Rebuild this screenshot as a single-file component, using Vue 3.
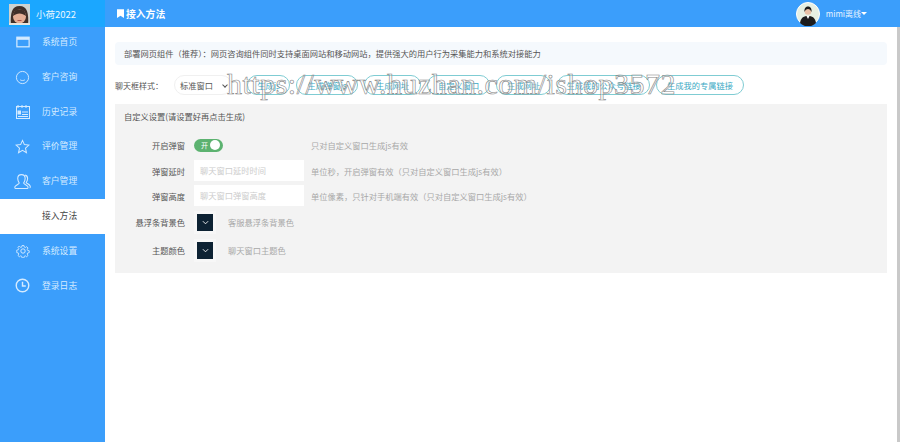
<script setup>
const menus = [
  { name: '系统首页', icon: 'home' },
  { name: '客户咨询', icon: 'smile' },
  { name: '历史记录', icon: 'history' },
  { name: '评价管理', icon: 'star' },
  { name: '客户管理', icon: 'user' },
  { name: '接入方法', icon: '', active: true },
  { name: '系统设置', icon: 'gear' },
  { name: '登录日志', icon: 'clock' }
]

const buttons = [
  { text: '生成js', width: 43 },
  { text: '生成弹窗js', width: 62 },
  { text: '生成网址', width: 57 },
  { text: '自定义窗口', width: 63 },
  { text: '生成网址', width: 55 },
  { text: '生成我的公众号链接', width: 93 },
  { text: '生成我的专属链接', width: 88 }
]

const inputs = [
  { label: '弹窗延时', placeholder: '聊天窗口延时时间', hint: '单位秒，开启弹窗有效（只对自定义窗口生成js有效）' },
  { label: '弹窗高度', placeholder: '聊天窗口弹窗高度', hint: '单位像素，只针对手机端有效（只对自定义窗口生成js有效）' }
]

const swatches = [
  { label: '悬浮条背景色', hint: '客服悬浮条背景色' },
  { label: '主题颜色', hint: '聊天窗口主题色' }
]
</script>

<template>
  <div class="page">
    <aside class="sidebar">
      <div class="brand">
        <svg class="brand-avatar" viewBox="0 0 21 21">
          <rect width="21" height="21" fill="#cfd3cf" />
          <path d="M2 21c-1-12 1-19 8.500-19S20 9 19 21z" fill="#3f2f28" />
          <ellipse cx="10.500" cy="12.500" rx="6.500" ry="7" fill="#e3ae95" />
          <path d="M4 12c.5-5 3-6.500 6.500-6.500S16.500 7 17 12c-4-3.500-9-3.500-13 0z" fill="#3f2f28" />
          <path d="M8.500 16.500h4" stroke="#b0524a" stroke-width="1" />
          <rect y="19" width="21" height="2" fill="#e8e4dc" />
        </svg>
        <span>小荷2022</span>
      </div>
      <nav>
        <a v-for="m in menus" :key="m.name" :class="['menu-item', { active: m.active }]">
          <span class="menu-icon">
            <svg v-if="m.icon === 'home'" viewBox="0 0 16 16" width="14" height="14">
              <rect x="1" y="2.500" width="14" height="11" fill="none" stroke="#d5ebff" stroke-width="1.400" />
              <rect x="1" y="2.500" width="14" height="3" fill="#d5ebff" />
            </svg>
            <svg v-if="m.icon === 'smile'" viewBox="0 0 16 16" width="15" height="15" fill="none" stroke="#d5ebff" stroke-width="1">
              <circle cx="8" cy="8" r="6.500" />
              <path d="M5.500 10.500c1.500 1 3.500 1 5 0" />
            </svg>
            <svg v-if="m.icon === 'history'" viewBox="0 0 16 16" width="16" height="16" fill="none" stroke="#d5ebff" stroke-width="1">
              <rect x="1.500" y="2.500" width="13" height="12" />
              <path d="M3 1v3M7 1v3M11 1v3M7 8h6M7 10.500h6M3 12.500h10" />
              <rect x="3" y="7" width="2.500" height="3" fill="#d5ebff" />
            </svg>
            <svg v-if="m.icon === 'star'" viewBox="0 0 16 16" width="15" height="15" fill="none" stroke="#d5ebff" stroke-width="1.100">
              <path d="M8 1.500l2 4.500 4.800.5-3.600 3.200 1 4.800L8 12l-4.200 2.500 1-4.800L1.200 6.500 6 6z" />
            </svg>
            <svg v-if="m.icon === 'user'" viewBox="0 0 16 16" width="17" height="17" fill="none" stroke="#d5ebff" stroke-width="1">
              <path d="M7 1.500c2.400 0 3.500 1.700 3.500 3.700S9.300 9 9 9.500c0 1 3 1.500 4 3.200.4.800.2 1.800-.5 1.800H1.500c-.7 0-.9-1-.5-1.800C2 11 5 10.500 5 9.500 4.700 9 3.500 7.200 3.500 5.200S4.600 1.500 7 1.500z" />
              <path d="M10.500 2c1.500.4 2.300 1.600 2.300 3.200 0 1.500-.8 3-1.300 4 .8.700 3 1.400 3.700 3 .3.700.2 1.800-.5 1.800" />
            </svg>
            <svg v-if="m.icon === 'gear'" viewBox="0 0 16 16" width="14" height="14" fill="none" stroke="#d5ebff" stroke-width="1.100">
              <path d="M6.800 1h2.400l.4 2 1.400.6 1.700-1.100 1.700 1.700-1.100 1.700.6 1.400 2 .4v2.400l-2 .4-.6 1.400 1.100 1.700-1.700 1.700-1.700-1.100-1.400.6-.4 2H6.800l-.4-2-1.400-.6-1.700 1.100-1.700-1.700 1.100-1.700-.6-1.400-2-.4V6.800l2-.4.6-1.400-1.100-1.700 1.700-1.700L5 3.600l1.400-.6z" transform="translate(.8 .8) scale(.9)" />
              <circle cx="8" cy="8" r="2.500" />
            </svg>
            <svg v-if="m.icon === 'clock'" viewBox="0 0 16 16" width="15" height="15" fill="none" stroke="#d5ebff" stroke-width="1.500">
              <circle cx="8" cy="8" r="6.700" />
              <path d="M8 4v4.500h3.500" />
            </svg>
          </span>
          <span>{{ m.name }}</span>
        </a>
      </nav>
    </aside>

    <div class="main">
      <header class="topbar">
        <div class="title">
          <svg viewBox="0 0 8 10" width="7" height="9"><path d="M0 0h8v10L4 7.500 0 10z" fill="#fff" /></svg>
          <span>接入方法</span>
        </div>
        <div class="account">
          <svg class="account-avatar" viewBox="0 0 24 24">
            <circle cx="12" cy="12" r="11.500" fill="#e6efe2" stroke="#fff" />
            <path d="M4 21c1-6 4-7 8-7s7 1 8 7a11 11 0 0 1-16 0z" fill="#1c1c1c" />
            <path d="M10.500 14l1.500 3 1.500-3z" fill="#fff" />
            <circle cx="12" cy="9.500" r="3.300" fill="#e8bfa5" />
            <path d="M8.500 10c-.4-4 1.500-5.500 3.500-5.500s4 1.500 3.500 5.500c-.7-2-2-3-3.500-3s-2.800 1-3.500 3z" fill="#1c1c1c" />
          </svg>
          <span>mimi离线</span>
          <i class="caret"></i>
        </div>
      </header>

      <div class="body-row">
        <section class="content">
          <div class="notice">部署网页组件（推荐）：网页咨询组件同时支持桌面网站和移动网站，提供强大的用户行为采集能力和系统对接能力</div>

          <div class="style-row">
            <span class="style-label">聊天框样式：</span>
            <div class="select"><span>标准窗口</span><i class="chev"></i></div>
            <div class="btns">
              <a v-for="b in buttons" :key="b.width" class="gen-btn" :style="{ width: b.width + 'px' }">{{ b.text }}</a>
            </div>
          </div>

          <div class="panel">
            <div class="panel-title">自定义设置(请设置好再点击生成)</div>
            <div class="form-row switch-row">
              <label>开启弹窗</label>
              <div class="switch"><span>开</span><i></i></div>
              <span class="hint switch-hint">只对自定义窗口生成js有效</span>
            </div>
            <div v-for="f in inputs" :key="f.label" class="form-row input-row">
              <label>{{ f.label }}</label>
              <div class="fake-input">{{ f.placeholder }}</div>
              <span class="hint">{{ f.hint }}</span>
            </div>
            <div v-for="s in swatches" :key="s.label" class="form-row swatch-row">
              <label>{{ s.label }}</label>
              <div class="swatch">
                <div class="swatch-inner">
                  <svg viewBox="0 0 8 5" width="7" height="5"><path d="M1 1l3 3 3-3" fill="none" stroke="#fff" stroke-width="1" /></svg>
                </div>
              </div>
              <span class="hint">{{ s.hint }}</span>
            </div>
          </div>
        </section>
        <div class="scroll-track"></div>
      </div>
    </div>

    <div class="watermark">https://www.huzhan.com/ishop3572</div>
  </div>
</template>

<style scoped>
.page {
  position: relative;
  width: 900px;
  height: 442px;
  display: flex;
  overflow: hidden;
  background: #fff;
  font-family: "Noto Sans CJK SC", "Liberation Sans", sans-serif;
  font-size: 8.250px;
  color: #444;
}

.sidebar {
  width: 105px;
  flex-shrink: 0;
  background: #3b9efb;
}

.brand {
  height: 27px;
  display: flex;
  align-items: center;
  gap: 6px;
  padding: 1px 0 0 9px;
  box-sizing: border-box;
  background: #1ba7ff;
  color: #e8f6ff;
  font-size: 9.500px;
}

.brand-avatar {
  width: 21px;
  height: 21px;
}

.menu-item {
  height: 34.800px;
  display: flex;
  align-items: center;
  color: #d5ebff;
  font-size: 8.800px;
  line-height: 1;
}

.menu-item:first-child {
  margin-top: -2px;
}

.menu-item.active {
  background: #fff;
  color: #444;
}

.menu-icon {
  width: 42px;
  padding-left: 3px;
  box-sizing: border-box;
  display: flex;
  justify-content: center;
  flex-shrink: 0;
}

.main {
  flex: 1;
  min-width: 0;
  display: flex;
  flex-direction: column;
}

.topbar {
  height: 27px;
  flex-shrink: 0;
  display: flex;
  align-items: center;
  justify-content: space-between;
  padding: 0 33px 0 12px;
  background: #3b9efb;
  color: #fff;
}

.title {
  display: flex;
  align-items: center;
  gap: 2px;
  font-size: 9.800px;
  font-weight: 700;
}

.account {
  display: flex;
  align-items: center;
  font-size: 8px;
  color: #e8f4ff;
}

.account-avatar {
  width: 24px;
  height: 24px;
  margin-right: 6px;
}

.caret {
  width: 0;
  height: 0;
  border: 3px solid transparent;
  border-top-color: #fff;
  border-bottom: 0;
}

.body-row {
  flex: 1;
  display: flex;
}

.content {
  flex: 1;
  min-width: 0;
  padding: 15px 10px 0 10px;
}

.scroll-track {
  width: 3px;
  flex-shrink: 0;
  background: #c9c9c9;
}

.notice {
  height: 23px;
  line-height: 23px;
  padding-left: 9px;
  background: #f5f9fd;
  border-radius: 4px;
  color: #555;
  white-space: nowrap;
}

.style-row {
  display: flex;
  align-items: center;
  height: 20px;
  margin-top: 10px;
  color: #555;
}

.style-label {
  width: 59px;
  flex-shrink: 0;
  font-size: 8px;
}

.select {
  width: 58px;
  height: 20px;
  padding-left: 5px;
  box-sizing: border-box;
  display: flex;
  align-items: center;
  justify-content: space-between;
  flex-shrink: 0;
  border: 1px solid #f0f0f0;
  border-radius: 10px;
  background: #fff;
}

.chev {
  width: 3px;
  height: 3px;
  margin-right: 4px;
  border-right: 1px solid #555;
  border-bottom: 1px solid #555;
  transform: rotate(45deg);
}

.btns {
  display: flex;
  gap: 6px;
  margin-left: 15px;
}

.gen-btn {
  height: 20px;
  box-sizing: border-box;
  flex-shrink: 0;
  border: 1px solid #7fccd3;
  border-radius: 10px;
  color: #3ba9c4;
  line-height: 18px;
  text-align: center;
  white-space: nowrap;
}

.panel {
  height: 169px;
  margin-top: 9px;
  padding-left: 9px;
  background: #f3f3f3;
}

.panel-title {
  height: 28px;
  line-height: 25px;
  color: #555;
}

.form-row {
  display: flex;
  align-items: center;
}

.form-row label {
  width: 61px;
  margin-right: 9px;
  flex-shrink: 0;
  text-align: right;
  color: #555;
  white-space: nowrap;
}

.switch-row {
  height: 26px;
}

.switch {
  position: relative;
  width: 29px;
  height: 13px;
  border-radius: 7px;
  background: #5cb270;
  color: #fff;
  font-size: 7px;
  line-height: 13px;
  padding-left: 7px;
  box-sizing: border-box;
}

.switch i {
  position: absolute;
  right: 3px;
  top: 1.500px;
  width: 10px;
  height: 10px;
  border-radius: 50%;
  background: #fff;
}

.hint {
  color: #a8a8a8;
  white-space: nowrap;
}

.switch-hint {
  margin-left: 88px;
}

.input-row {
  height: 25px;
}

.fake-input {
  width: 110px;
  height: 21px;
  line-height: 21px;
  padding-left: 6px;
  box-sizing: border-box;
  flex-shrink: 0;
  margin-right: 7px;
  background: #fff;
  color: #ccc;
}

.swatch-row {
  height: 28px;
}

.swatch {
  width: 22px;
  height: 23px;
  margin-right: 12px;
  padding: 3px;
  box-sizing: border-box;
  flex-shrink: 0;
  background: #f7f7f7;
}

.swatch-inner {
  width: 16px;
  height: 17px;
  background: #0d2233;
  display: flex;
  align-items: center;
  justify-content: center;
}

.watermark {
  position: absolute;
  left: 227px;
  top: 64px;
  font-family: "Liberation Serif", serif;
  font-size: 30px;
  letter-spacing: 0.500px;
  line-height: 1.300;
  color: rgba(255, 255, 255, 0.35);
  -webkit-text-stroke: 0.600px #858585;
  white-space: nowrap;
  pointer-events: none;
}
</style>
